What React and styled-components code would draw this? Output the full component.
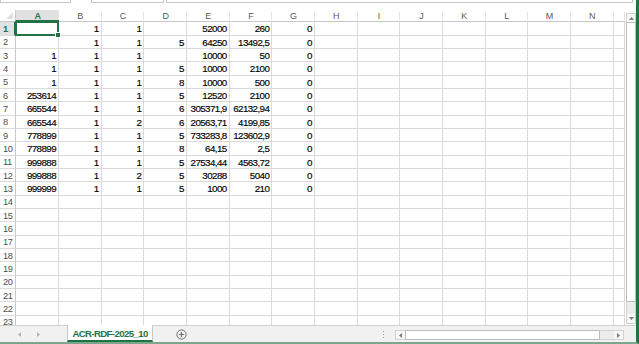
import React from "react";
import styled, { createGlobalStyle } from "styled-components";

const Global = createGlobalStyle`
  html, body { margin: 0; padding: 0; background: #fff; overflow: hidden; }
  #root { width: 639px; height: 344px; }
`;

const GREEN = "#217346";
const LINE = "#dadada";
const FONT = `"Liberation Sans", Arial, sans-serif`;

const Window = styled.div`
  width: 639px;
  height: 344px;
  box-sizing: border-box;
  border-right: 3px solid ${GREEN};
  border-bottom: 2px solid #7da58b;
  display: flex;
  flex-direction: column;
  background: #fff;
  overflow: hidden;
  font-family: ${FONT};
`;

const FormulaStrip = styled.div`
  height: 10px;
  flex: none;
  display: flex;
  align-items: flex-start;
`;

const FBox = styled.div`
  height: 3px;
  width: ${(p) => p.$w}px;
  margin-left: ${(p) => p.$ml || 0}px;
  border: 1px solid #c6c6c6;
  border-top: none;
  box-sizing: border-box;
  position: relative;
`;

const Body = styled.div`
  flex: 1;
  display: flex;
  min-height: 0;
`;

const SheetArea = styled.div`
  flex: 1;
  overflow: hidden;
`;

const Grid = styled.div`
  display: grid;
  grid-template-columns: 16.33px repeat(14, 42.67px) 11px;
  grid-template-rows: 12.33px;
  grid-auto-rows: 13.33px;
`;

const Corner = styled.div`
  border-right: 1px solid #c8c8c8;
  border-bottom: 1px solid #c8c8c8;
  box-sizing: border-box;
  position: relative;
  &::after {
    content: "";
    position: absolute;
    right: 2px;
    bottom: 2px;
    width: 0;
    height: 0;
    border-left: 7px solid transparent;
    border-bottom: 7px solid #dfdfdf;
  }
`;

const ColHead = styled.div`
  box-sizing: border-box;
  display: flex;
  align-items: center;
  justify-content: center;
  font-size: 9px;
  color: ${(p) => (p.$sel ? GREEN : "#595959")};
  font-weight: ${(p) => (p.$sel ? 700 : 400)};
  background: ${(p) => (p.$sel ? "#e1e1e1" : "#fff")};
  border-bottom: ${(p) => (p.$sel ? `2px solid ${GREEN}` : "1px solid #c8c8c8")};
  position: relative;
  padding-top: 1px;
  &::after {
    content: "";
    position: absolute;
    right: 0;
    top: 2px;
    bottom: 1px;
    width: 1px;
    background: #e3e3e3;
  }
`;

const RowHead = styled.div`
  box-sizing: border-box;
  display: flex;
  align-items: center;
  padding-left: 3px;
  font-size: 9.3px;
  letter-spacing: -0.4px;
  color: ${(p) => (p.$sel ? GREEN : "#505050")};
  font-weight: ${(p) => (p.$sel ? 700 : 400)};
  background: ${(p) => (p.$sel ? "#e1e1e1" : "#fff")};
  border-right: ${(p) => (p.$sel ? `2px solid ${GREEN}` : "1px solid #c8c8c8")};
  border-bottom: 1px solid ${LINE};
  padding-top: 1px;
`;

const Cell = styled.div`
  box-sizing: border-box;
  display: flex;
  align-items: center;
  justify-content: flex-end;
  padding: 1px 2px 0 0;
  font-size: 9.8px;
  letter-spacing: -0.6px;
  color: #000;
  -webkit-text-stroke: 0.15px #000;
  white-space: nowrap;
  border-right: 1px solid ${LINE};
  border-bottom: 1px solid ${LINE};
  position: relative;
  ${(p) =>
    p.$active &&
    `
    &::after {
      content: "";
      position: absolute;
      left: -1px; top: -1px; right: -1px; bottom: -1px;
      border: 2px solid ${GREEN};
      pointer-events: none;
    }
    &::before {
      content: "";
      position: absolute;
      right: -3px; bottom: -3px;
      width: 4px; height: 4px;
      background: ${GREEN};
      border: 1px solid #fff;
      z-index: 2;
    }
  `}
`;

const VScroll = styled.div`
  width: 10px;
  margin: 3px 0 1px 0;
  box-sizing: border-box;
  border: 1px solid #d2d2d2;
  background: #ececec;
  display: flex;
  flex-direction: column;
`;

const ArrowBox = styled.div`
  flex: none;
  height: ${(p) => p.$h || 9}px;
  width: ${(p) => p.$w || "auto"};
  display: flex;
  align-items: center;
  justify-content: center;
  background: #f7f7f7;
`;

const VThumb = styled.div`
  height: 280px;
  flex: none;
  box-sizing: border-box;
  background: #fff;
  border: 1px solid #bdbdbd;
  margin: 0 -1px;
`;

const Filler = styled.div`
  flex: 1;
`;

const TabBar = styled.div`
  height: 17px;
  flex: none;
  display: flex;
  align-items: stretch;
  background: #f1f1f1;
  border-top: 1px solid #d0d0d0;
  box-sizing: border-box;
`;

const Nav = styled.div`
  width: 67px;
  flex: none;
  display: flex;
  align-items: center;
  gap: 14px;
  padding-left: 17px;
  box-sizing: border-box;
`;

const Tab = styled.div`
  width: 86px;
  flex: none;
  margin-top: -1px;
  box-sizing: border-box;
  background: #fff;
  border-left: 1px solid #c8c8c8;
  border-right: 1px solid #c8c8c8;
  border-bottom: 2px solid ${GREEN};
  display: flex;
  align-items: center;
  justify-content: center;
  color: ${GREEN};
  font-weight: 700;
  font-size: 9.6px;
  letter-spacing: -0.6px;
  white-space: nowrap;
  padding-top: 1px;
`;

const AddBtn = styled.div`
  margin-left: 23px;
  width: 11px;
  flex: none;
  display: flex;
  align-items: center;
  justify-content: center;
`;

const Splitter = styled.div`
  width: 3px;
  flex: none;
  display: flex;
  flex-direction: column;
  align-items: center;
  justify-content: center;
  gap: 2px;
  margin-right: 10px;
  span {
    width: 1px;
    height: 1px;
    background: #9a9a9a;
  }
`;

const HScroll = styled.div`
  width: 229px;
  flex: none;
  margin: 4px 12px 2px 0;
  box-sizing: border-box;
  border: 1px solid #d2d2d2;
  background: #ececec;
  display: flex;
`;

const HThumb = styled.div`
  width: 195px;
  flex: none;
  box-sizing: border-box;
  background: #fff;
  border: 1px solid #bdbdbd;
  margin: -1px 0;
`;

const Tri = ({ dir, color = "#7a7a7a", size = 5 }) => {
  const pts = {
    up: "0,4 2.5,1 5,4",
    down: "0,1 2.5,4 5,1",
    left: "4,0 1,2.5 4,5",
    right: "1,0 4,2.5 1,5",
  }[dir];
  return (
    <svg width={size} height={size} viewBox="0 0 5 5">
      <polygon points={pts} fill={color} />
    </svg>
  );
};

const cols = ["A", "B", "C", "D", "E", "F", "G", "H", "I", "J", "K", "L", "M", "N", ""];

const data = [
  ["", "1", "1", "", "52000", "260", "0"],
  ["", "1", "1", "5", "64250", "13492,5", "0"],
  ["1", "1", "1", "", "10000", "50", "0"],
  ["1", "1", "1", "5", "10000", "2100", "0"],
  ["1", "1", "1", "8", "10000", "500", "0"],
  ["253614", "1", "1", "5", "12520", "2100", "0"],
  ["665544", "1", "1", "6", "305371,9", "62132,94", "0"],
  ["665544", "1", "2", "6", "20563,71", "4199,85", "0"],
  ["778899", "1", "1", "5", "733283,8", "123602,9", "0"],
  ["778899", "1", "1", "8", "64,15", "2,5", "0"],
  ["999888", "1", "1", "5", "27534,44", "4563,72", "0"],
  ["999888", "1", "2", "5", "30288", "5040", "0"],
  ["999999", "1", "1", "5", "1000", "210", "0"],
];

export default function App() {
  const rows = [];
  for (let r = 0; r < 23; r++) {
    const vals = data[r] || [];
    rows.push(
      <React.Fragment key={r}>
        <RowHead $sel={r === 0}>{r + 1}</RowHead>
        {cols.map((c, ci) => (
          <Cell key={ci} $active={r === 0 && ci === 0}>
            {vals[ci] || ""}
          </Cell>
        ))}
      </React.Fragment>
    );
  }

  return (
    <>
      <Global />
      <Window>
        <FormulaStrip>
          <FBox $w={71} />
          <FBox $w={73} $ml={20} />
          <FBox $w={467} $ml={2} />
        </FormulaStrip>
        <Body>
          <SheetArea>
            <Grid>
              <Corner />
              {cols.map((c, i) => (
                <ColHead key={i} $sel={i === 0}>
                  {c}
                </ColHead>
              ))}
              {rows}
            </Grid>
          </SheetArea>
          <VScroll>
            <ArrowBox $h={8}>
              <Tri dir="up" />
            </ArrowBox>
            <VThumb />
            <Filler />
            <ArrowBox $h={9}>
              <Tri dir="down" />
            </ArrowBox>
          </VScroll>
        </Body>
        <TabBar>
          <Nav>
            <Tri dir="left" color="#b4b4b4" />
            <Tri dir="right" color="#b4b4b4" />
          </Nav>
          <Tab>ACR-RDF-2025_10</Tab>
          <AddBtn>
            <svg width="11" height="11" viewBox="0 0 11 11">
              <circle cx="5.5" cy="5.5" r="4.6" fill="none" stroke="#6f6f6f" strokeWidth="1" />
              <path d="M5.5 3v5M3 5.5h5" stroke="#6f6f6f" strokeWidth="1.2" />
            </svg>
          </AddBtn>
          <Filler />
          <Splitter>
            <span />
            <span />
            <span />
          </Splitter>
          <HScroll>
            <ArrowBox $w="9px" $h={8}>
              <Tri dir="left" />
            </ArrowBox>
            <HThumb />
            <Filler />
            <ArrowBox $w="9px" $h={8}>
              <Tri dir="right" />
            </ArrowBox>
          </HScroll>
        </TabBar>
      </Window>
    </>
  );
}
